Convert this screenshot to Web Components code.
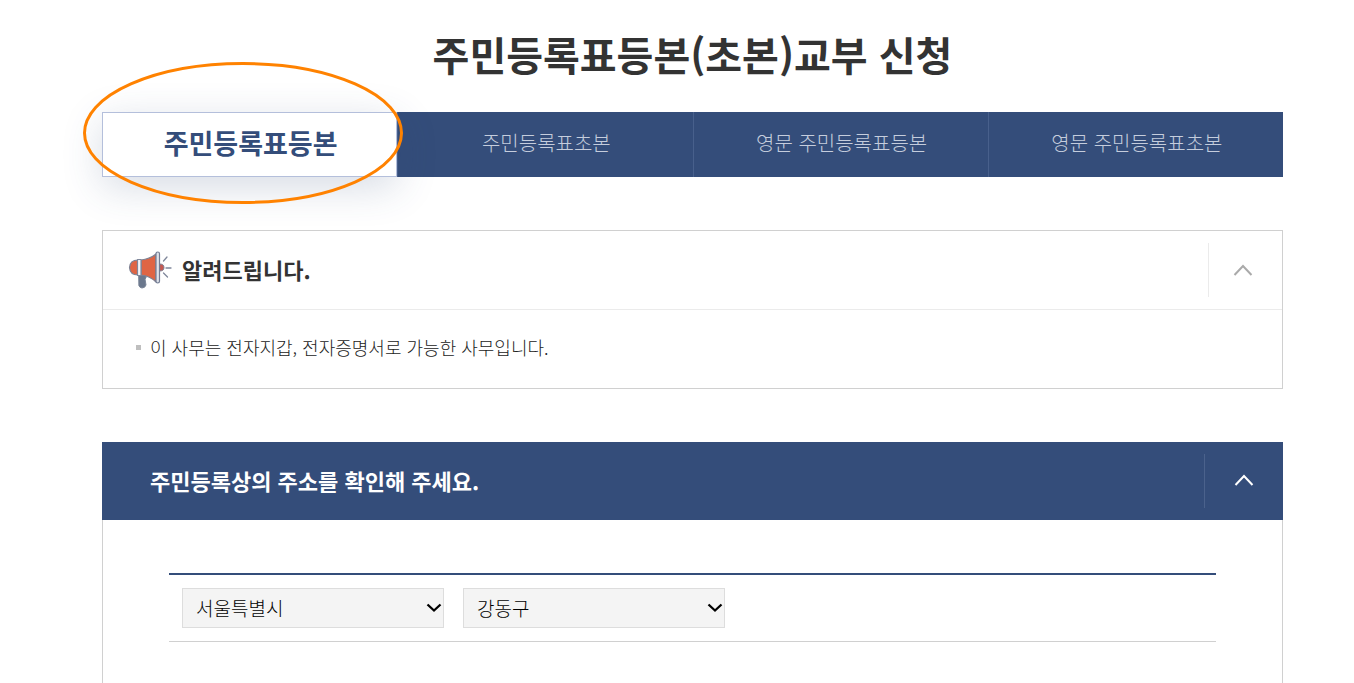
<!DOCTYPE html>
<html lang="ko">
<head>
<meta charset="utf-8">
<meta name="viewport" content="width=device-width, initial-scale=1">
<title>주민등록표등본(초본)교부 신청</title>
<style>
html, body { margin: 0; background: #fff; }
body { font-family: "Noto Sans CJK KR", "Noto Sans", sans-serif; color: #333; overflow-x: hidden; }
</style>
</head>
<body>
<cert-page>
  <span slot="title">주민등록표등본(초본)교부 신청</span>
  <cert-tabs slot="tabs">
    <cert-tab selected>주민등록표등본</cert-tab>
    <cert-tab>주민등록표초본</cert-tab>
    <cert-tab>영문 주민등록표등본</cert-tab>
    <cert-tab>영문 주민등록표초본</cert-tab>
  </cert-tabs>
  <cert-panel>
    <horn-icon slot="icon"></horn-icon>
    <span slot="heading">알려드립니다.</span>
    <cert-notes>이 사무는 전자지갑, 전자증명서로 가능한 사무입니다.</cert-notes>
  </cert-panel>
  <cert-panel primary>
    <span slot="heading">주민등록상의 주소를 확인해 주세요.</span>
    <cert-address></cert-address>
  </cert-panel>
</cert-page>
<script>
const define = (name, html, setup) => {
  const template = document.createElement('template');
  template.innerHTML = html;
  customElements.define(name, class extends HTMLElement {
    constructor() {
      super();
      this.attachShadow({ mode: 'open' }).append(template.content.cloneNode(true));
      if (setup) setup(this.shadowRoot, this);
    }
  });
};

define('cert-page', `
<style>
:host { display: block; padding: 24px 71px 0 102px; }
h1 { margin: 0 0 28px; font-size: 40px; line-height: 60px; font-weight: 700; text-align: center; }
.panels { display: flex; flex-direction: column; gap: 53px; margin-top: 53px; }
</style>
<h1><slot name="title"></slot></h1>
<slot name="tabs"></slot>
<main class="panels"><slot></slot></main>`);

define('cert-tabs', `
<style>
:host { display: block; }
nav { display: grid; grid-template-columns: repeat(4, 1fr); height: 65px; background: #344d7a; }
</style>
<nav><slot></slot></nav>`);

define('cert-tab', `
<style>
:host { display: flex; position: relative; box-sizing: border-box; border-left: 1px solid #48608c; }
a { flex: 1; display: block; box-sizing: border-box; padding-left: 2px; color: #c5cddd; text-align: center; text-decoration: none; font-size: 20px; font-weight: 300; line-height: 62px; }
svg { display: none; }
:host([selected]) { z-index: 1; border: 1px solid #b4bfdb; background: #fff; box-shadow: 0 10px 40px rgba(52, 77, 122, .2); }
:host([selected]) a { color: #344d7a; font-size: 27px; font-weight: 700; line-height: 60px; }
:host([selected]) svg { display: block; position: absolute; left: -20px; top: -51px; width: 321px; height: 143px; pointer-events: none; z-index: 1; }
</style>
<a href="#"><slot></slot></a>
<svg viewBox="0 0 321 143" aria-hidden="true"><ellipse cx="160" cy="71" rx="158.500" ry="69.500" fill="none" stroke="#ff8200" stroke-width="3"/></svg>`);

define('cert-panel', `
<style>
:host { display: block; }
section { border: 1px solid #d0d0d0; }
header { display: flex; align-items: center; height: 78px; border-bottom: 1px solid #ebebeb; padding-left: 24px; }
h2 { flex: 1; margin: 0; padding-bottom: 2px; font-size: 22px; line-height: 32px; font-weight: 700; }
button { width: 74px; height: 54px; padding: 0 5px 0 0; border: 0; border-left: 1px solid #ebebeb; background: none; color: #aaa; display: grid; place-items: center; box-sizing: border-box; cursor: pointer; }
:host([primary]) section { border-top: 0; }
:host([primary]) header { height: 78px; margin: 0 -1px; padding-left: 48px; background: #344d7a; border: 0; color: #fff; }
:host([primary]) button { width: 79px; padding: 0 0 2px; border-color: #4b628c; color: #fff; }
</style>
<section>
  <header>
    <slot name="icon"></slot>
    <h2><slot name="heading"></slot></h2>
    <button type="button" aria-label="접기" aria-expanded="true"><svg width="20" height="14" viewBox="0 0 20 14" fill="none" stroke="currentColor" stroke-width="2"><path d="M1.500 12 10 3l8.500 9"/></svg></button>
  </header>
  <div class="body"><slot></slot></div>
</section>`, root => {
  const button = root.querySelector('button');
  button.addEventListener('click', () => {
    const body = root.querySelector('.body');
    body.hidden = !body.hidden;
    button.setAttribute('aria-expanded', String(!body.hidden));
  });
});

define('cert-notes', `
<style>
:host { display: block; padding: 23px 33px 27px; color: #222; }
ul { margin: 0; padding: 0; list-style: none; }
li { display: flex; align-items: center; gap: 9px; font-size: 18px; line-height: 28px; font-weight: 300; }
li::before { content: ""; width: 5px; height: 5px; background: #bfbfbf; }
</style>
<ul><li><span><slot></slot></span></li></ul>`);

define('cert-address', `
<style>
:host { display: block; padding: 53px 66px 60px; }
.row { display: flex; gap: 19px; padding: 13px; border-top: 2px solid #344d7a; border-bottom: 1px solid #d0d0d0; }
.field { display: grid; grid-template-columns: 1fr auto; width: 262px; }
select { grid-area: 1 / 1 / 2 / 3; appearance: none; width: 100%; height: 40px; box-sizing: border-box; margin: 0; padding: 0 24px 2px 13px; border: 1px solid #ddd; border-radius: 0; background-color: #f4f4f4; color: #000; font-family: inherit; font-size: 19px; font-weight: 300; }
svg { grid-area: 1 / 2; align-self: center; margin-right: 2px; pointer-events: none; z-index: 1; }
</style>
<div class="row">
  <div class="field"><select aria-label="시도"><option>서울특별시</option></select><svg width="16" height="10" viewBox="0 0 16 10" fill="none" stroke="#000" stroke-width="2.300" aria-hidden="true"><path d="m1.500 1.500 6.500 6 6.500-6"/></svg></div>
  <div class="field"><select aria-label="시군구"><option>강동구</option></select><svg width="16" height="10" viewBox="0 0 16 10" fill="none" stroke="#000" stroke-width="2.300" aria-hidden="true"><path d="m1.500 1.500 6.500 6 6.500-6"/></svg></div>
</div>`);

define('horn-icon', `
<style>:host { display: block; width: 46px; height: 42px; margin-right: 9px; } svg { display: block; }</style>
<svg width="46" height="42" viewBox="0 0 46 42" aria-hidden="true" stroke-linejoin="round" stroke-linecap="round">
  <path d="M12 26h7v3l-1 1 1 6q-1 3-4 3-2 0-3-2z" fill="#6b788d" stroke="#7b8699"/>
  <path d="M11 11q-8 0-8.500 7.500 .5 7.500 8.500 7.500z" fill="#df6544" stroke="#7d8294" stroke-width="1.200"/>
  <path d="M14 11q9-1 15-6v28q-6-6-15-7z" fill="#df6544" stroke="#7d8294" stroke-width="1.200"/>
  <path d="M10.500 10.500H14v16h-3.500z" fill="#f4f5f8" stroke="#7f879b" stroke-width="1.200"/>
  <path d="M33 15q4 0 4 3.500T33 22z" fill="#c75850" stroke="#7d8294"/>
  <rect x="29" y="3" width="3.500" height="31" rx="1.750" fill="#dfe2e9" stroke="#737d94" stroke-width="1.200"/>
  <path d="m36.500 12 3.500-4m-1 11h5m-7.500 5 4 4" fill="none" stroke="#7f879b" stroke-width="1.300"/>
</svg>`);
</script>
</body>
</html>
